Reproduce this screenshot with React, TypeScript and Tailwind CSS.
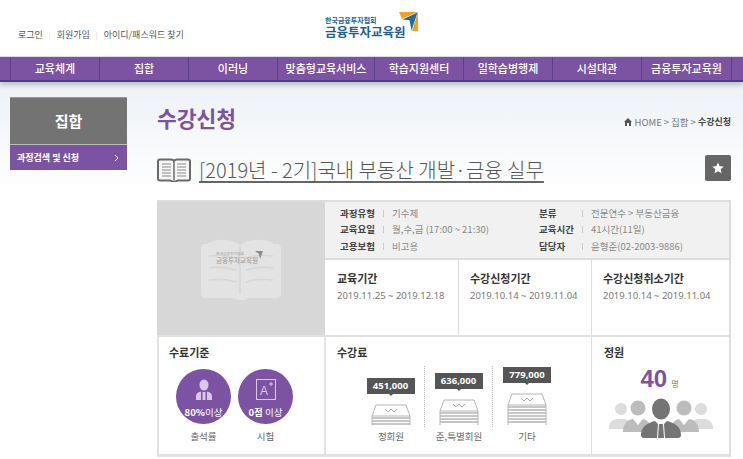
import React from "react";

const F = { fontFamily: '"Noto Sans CJK KR","Noto Sans",sans-serif' };
const navs: [string, number][] = [
  ["교육체계", 89], ["집합", 89], ["이러닝", 89], ["맞춤형교육서비스", 97],
  ["학습지원센터", 89], ["일학습병행제", 89], ["시설대관", 89], ["금융투자교육원", 90],
];

function BookOutline() {
  return (
    <svg width="34" height="24" viewBox="0 0 34 24" fill="none" stroke="#6a6a6a" strokeWidth="2" strokeLinejoin="round">
      <path d="M3 1.500h11c1.500 0 2.500.7 3 1.500.5-.8 1.500-1.500 3-1.500h11c1 0 2 1 2 2v17c0 1-1 2-2 2H20.500l-1.500 1h-4l-1.500-1H3c-1 0-2-1-2-2v-17c0-1 1-2 2-2z" fill="#f6f6f6" />
      <path d="M17 3v19" strokeWidth="1.500" />
      <path strokeWidth="1.200" stroke="#8a8a8a" d="M5 6h9M5 9h9M5 12h9M5 15h9M5 18h9M20 6h9M20 9h9M20 12h9M20 15h9M20 18h9" />
    </svg>
  );
}

function BookLight() {
  return (
    <svg width="80" height="66" viewBox="0 0 80 66" fill="#e3e3e3" stroke="none">
      <path d="M4 6h3v-1C18 0 31 1 39 7c8-6 21-7 33-2v1h4c2 0 4 2 4 4v46c0 2-2 4-4 4H48c-2 0-3 2-5 2h-6c-2 0-3-2-5-2H4c-2 0-4-2-4-4V10c0-2 2-4 4-4z" />
      <path d="M8 18c9-1.500 19-.5 27 2M8 30c9-1.500 19-.5 27 2M8 42c9-1.500 19-.5 27 2M72 18c-9-1.500-19-.5-27 2M72 30c-9-1.500-19-.5-27 2M72 42c-9-1.500-19-.5-27 2M39 8v48" fill="none" stroke="#d6d6d6" strokeWidth="1.500" />
    </svg>
  );
}

function Logo() {
  return (
    <svg width="20" height="20" viewBox="0 0 20 20">
      <path d="M1 0h19L4 7z" fill="#f7a11f" />
      <path d="M20 0v19h-6z" fill="#f7a11f" />
      <path d="M19.500 .500 4.500 7.500l7 .8L13.500 18.500z" fill="#1c6ea8" />
    </svg>
  );
}

function Money({ h }: { h: number }) {
  const lines = [];
  for (let y = 14; y < h; y += 3) lines.push(y);
  return (
    <svg width="40" height={h} viewBox={`0 0 40 ${h}`} fill="none" stroke="#b5b5b5" strokeWidth="1">
      <path d="M1 12 5 1h30l4 11z" fill="#fff" />
      <path d="M14 5l3 3 3-3 3 3 3-3" stroke="#aaa" />
      {lines.map((y) => (
        <path key={y} d={`M1 ${y}h38`} strokeWidth="1.600" />
      ))}
      <path d={`M1 12v${h - 12}M39 12v${h - 12}`} />
    </svg>
  );
}

function People() {
  return (
    <svg width="104" height="42" viewBox="0 0 104 42">
      <g fill="#dcdcdc">
        <circle cx="12" cy="11" r="6" /><circle cx="92" cy="11" r="6" />
        <path d="M0 31c0-7 3-9 8-10h8c4 1 6 3 7 10zM104 31c0-7-3-9-8-10h-8c-4 1-6 3-7 10z" />
      </g>
      <g fill="#bcbcbc">
        <circle cx="29" cy="10" r="7.500" /><circle cx="75" cy="10" r="7.500" />
        <path d="M14 34c0-8 4-12 10-13l5 6 5-6c5 1 8 5 9 13zM90 34c0-8-4-12-10-13l-5 6-5-6c-5 1-8 5-9 13z" />
      </g>
      <ellipse cx="52" cy="11" rx="9" ry="10.500" fill="#747474" />
      <path d="M35 40c-2 0-3-1-3-3 0-8 6-12 14-14l3 3-1 14zM69 40c2 0 3-1 3-3 0-8-6-12-14-14l-3 3 1 14zM50 26h4l1 14h-6z" fill="#747474" />
    </svg>
  );
}

function Price({ price, label, h, last }: { price: string; label: string; h: number; last?: boolean }) {
  return (
    <div className="w-[68px] flex flex-col items-center relative">
      <div className={`flex flex-col items-center justify-end w-full h-[61px] ${last ? "" : "border-r border-dotted border-[#bbb]"}`}>
        <div className="relative w-[48px] h-[16px] bg-[#555] text-white text-[9.500px] font-bold leading-[15px] text-center mb-[10px] shrink-0" style={{ fontFamily: '"Noto Sans",sans-serif' }}>
          {price}
          <span className="absolute left-1/2 -translate-x-1/2 top-[15px] w-0 h-0 border-x-[3px] border-x-transparent border-t-[3px] border-t-[#555]" />
        </div>
        <Money h={h} />
        <div className="h-[2px]" />
      </div>
      <div className="text-[9.500px] text-[#666] mt-[2px] leading-[14px]">{label}</div>
    </div>
  );
}

function Circle({ pct, children, small }: { pct: React.ReactNode; children: React.ReactNode; small: string }) {
  return (
    <div className="w-[55px] flex flex-col items-center">
      <div className="w-[55px] h-[55px] rounded-full bg-[#7c53a3] flex flex-col items-center pt-[10px]">
        <div className="h-[24px]">{children}</div>
        <div className="text-white text-[9.500px] leading-[14px] mt-[2px] whitespace-nowrap">{pct}</div>
      </div>
      <div className="text-[9.500px] text-[#666] mt-[5px] leading-[14px]">{small}</div>
    </div>
  );
}

function Info({ label, value }: { label: string; value: string }) {
  return (
    <div className="flex items-center h-[16.500px] text-[9.500px] leading-none whitespace-nowrap">
      <span className="font-bold text-[#444] w-[43px]">{label}</span>
      <span className="w-px h-[7px] bg-[#ccc] mr-[8px]" />
      <span className="text-[#888]">{value}</span>
    </div>
  );
}

function Period({ title, date, cls }: { title: string; date: string; cls: string }) {
  return (
    <div className={`pt-[11px] ${cls}`}>
      <div className="text-[11px] font-bold text-[#333] leading-[14px]">{title}</div>
      <div className="text-[9.500px] text-[#777] leading-[14px] mt-[4px]" style={{ fontFamily: '"Noto Sans","Noto Sans CJK KR",sans-serif' }}>{date}</div>
    </div>
  );
}

export default function App() {
  return (
    <div className="w-[743px] h-[459px] overflow-hidden bg-white relative" style={F}>
      <header className="h-[56px] flex">
        <div className="w-[325px] pl-[18px] pt-[28px] flex items-start text-[9px] text-[#555] leading-[14px]">
          <span>로그인</span>
          <span className="mx-[6px] text-[#ccc] text-[7px]">|</span>
          <span>회원가입</span>
          <span className="mx-[6px] text-[#ccc] text-[7px]">|</span>
          <span>아이디/패스워드 찾기</span>
        </div>
        <div className="pt-[12px] flex items-start">
          <div className="w-[84px] pt-[4px] text-[#1c5f96]">
            <div className="text-[7px] font-bold leading-[8px] whitespace-nowrap">한국금융투자협회</div>
            <div className="text-[12.500px] font-bold leading-[16px] whitespace-nowrap">금융투자교육원</div>
          </div>
          <div className="-ml-[11px]"><Logo /></div>
        </div>
      </header>

      <nav className="h-[26px] bg-[#7c53a3] border-b-[2px] border-b-[#4f3a80] border-t border-t-[#ddd] flex pl-[10px] shadow-[0_3px_5px_rgba(90,100,120,0.35)] relative">
        {navs.map(([n, w]) => (
          <div key={n} style={{ width: w }} className="border-l border-l-[#5f3f8a] text-white text-[11px] font-medium leading-[23px] text-center shrink-0 whitespace-nowrap">{n}</div>
        ))}
        <div className="border-l border-l-[#5f3f8a] flex-1" />
      </nav>

      <div className="flex bg-gradient-to-b from-[#edf1f6] to-[#ffffff] to-[110px] h-[377px]">
        <aside className="ml-[10px] mt-[15px] w-[117px] shrink-0">
          <div className="h-[47px] bg-[#737373] border-t border-[#999] text-white text-[15px] font-bold flex items-center justify-center">집합</div>
          <div className="h-px bg-[#bbb]" />
          <div className="h-[25px] bg-[#7c53a3] text-white text-[9px] font-bold flex items-center justify-between pl-[7px] pr-[8px]">
            <span>과정검색 및 신청</span>
            <svg width="5" height="8" viewBox="0 0 5 8" fill="none" stroke="#fff" strokeWidth="1"><path d="M1 1l3 3-3 3" /></svg>
          </div>
        </aside>

        <main className="ml-[30px] w-[574px] shrink-0">
          <div className="flex justify-between items-start h-[61px] pt-[20px]">
            <h1 className="text-[21.500px] font-bold text-[#7c53a3] leading-[32px]">수강신청</h1>
            <div className="flex items-center text-[9.500px] text-[#777] mt-[12px] leading-[16px] whitespace-nowrap">
              <svg width="8" height="8" viewBox="0 0 8 8" fill="#555" className="mr-[3px]"><path d="M4 0 8 4H7v4H5V5H3v3H1V4H0z" /></svg>
              <span>HOME</span>
              <span className="mx-[2px]">&gt;</span>
              <span>집합</span>
              <span className="mx-[2px]">&gt;</span>
              <span className="text-[#444] text-[9px] font-bold">수강신청</span>
            </div>
          </div>

          <div className="flex items-center justify-between h-[57px]">
            <div className="flex items-center -mt-[3px]">
              <BookOutline />
              <span className="ml-[8px] text-[20px] font-light text-[#555] underline decoration-[#666] decoration-[1.500px] underline-offset-[3px] leading-[28px] whitespace-nowrap">[2019년 - 2기]국내 부동산 개발·금융 실무</span>
            </div>
            <div className="w-[26px] h-[26px] bg-[#666] rounded-[2px] flex items-center justify-center -mt-[7px]">
              <svg width="12" height="12" viewBox="0 0 24 24" fill="#fff"><path d="M12 1l3.400 7.300 7.900.9-5.900 5.400 1.600 7.900L12 18.500l-7 4 1.600-7.900L.7 9.200l7.900-.9z" /></svg>
            </div>
          </div>

          <div className="border-t-[2px] border-[#ddd] border-r-[2px]">
            <div className="flex">
              <div className="w-[168px] h-[133px] bg-[#d7d7d7] relative flex items-center justify-center shrink-0">
                <div className="mt-[4px]"><BookLight /></div>
                <div className="absolute left-[59px] top-[49px] text-[#a0a0a0]">
                  <div className="text-[3.800px] leading-[5px] whitespace-nowrap">한국금융투자협회</div>
                  <div className="text-[6.500px] font-medium leading-[9px] whitespace-nowrap">금융투자교육원</div>
                </div>
                <svg width="8" height="8" viewBox="0 0 8 8" className="absolute left-[98px] top-[49px]" fill="#8c8c8c"><path d="M0 0h8L5 8 4 3z" /></svg>
              </div>
              <div className="flex-1">
                <div className="h-[58px] bg-[#f1f1f1] border-b-[2px] border-[#ddd] flex pt-[3px]">
                  <div className="w-[214px] pl-[15px] shrink-0">
                    <Info label="과정유형" value="기수제" />
                    <Info label="교육요일" value="월,수,금 (17:00 ~ 21:30)" />
                    <Info label="고용보험" value="비고용" />
                  </div>
                  <div>
                    <Info label="분류" value="전문연수 > 부동산금융" />
                    <Info label="교육시간" value="41시간(11일)" />
                    <Info label="담당자" value="윤형준(02-2003-9886)" />
                  </div>
                </div>
                <div className="flex h-[75px]">
                  <Period title="교육기간" date="2019.11.25 ~ 2019.12.18" cls="w-[134px] pl-[12px] border-r-[1px] border-[#ddd]" />
                  <Period title="수강신청기간" date="2019.10.14 ~ 2019.11.04" cls="w-[133px] pl-[11px] border-r-[1px] border-[#ddd]" />
                  <Period title="수강신청취소기간" date="2019.10.14 ~ 2019.11.04" cls="flex-1 pl-[11px]" />
                </div>
              </div>
            </div>

            <div className="flex h-[122px] border-t-[2px] border-b-[3px] border-[#e2e2e2]">
              <div className="w-[169px] border-l-[2px] border-r-[2px] border-[#e2e2e2] pl-[10px] pt-[8px] shrink-0">
                <div className="text-[11px] font-bold text-[#333] leading-[14px]">수료기준</div>
                <div className="flex gap-[7px] ml-[7px] mt-[10px]">
                  <Circle small="출석률" pct={<><b>80%</b>이상</>}>
                    <svg width="18" height="24" viewBox="0 0 18 24" fill="#d9c8ea"><ellipse cx="9" cy="6" rx="4.500" ry="5.500" /><path d="M1 21v-4c0-3 3-4 5-4.500V21zM17 21v-4c0-3-3-4-5-4.500V21zM7.500 13h3v8h-3z" /></svg>
                  </Circle>
                  <Circle small="시험" pct={<><b>0점</b> 이상</>}>
                    <svg width="20" height="22" viewBox="0 0 20 22" fill="none" stroke="#d9c8ea"><rect x="0.500" y="0.500" width="19" height="20" /><text x="4" y="16" fontSize="12" fill="#d9c8ea" stroke="none" fontFamily="Liberation Sans">A</text><path d="M13 5h4M15 3v4" /></svg>
                  </Circle>
                </div>
              </div>
              <div className="w-[266px] border-r-[1px] border-[#ddd] pl-[11px] pt-[8px] shrink-0">
                <div className="text-[11px] font-bold text-[#333] leading-[14px]">수강료</div>
                <div className="flex ml-[20px] mt-[7px]">
                  <Price price="451,000" label="정회원" h={21} />
                  <Price price="636,000" label="준,특별회원" h={26} />
                  <Price price="779,000" label="기타" h={32} last />
                </div>
              </div>
              <div className="flex-1 pl-[12px] pt-[8px]">
                <div className="text-[11px] font-bold text-[#333] leading-[14px]">정원</div>
                <div className="flex items-end justify-center pr-[14px] mt-[3px] h-[32px] leading-none">
                  <span className="text-[24px] font-bold text-[#7c53a3] leading-[30px]" style={{ fontFamily: '"Liberation Sans",sans-serif' }}>40</span>
                  <span className="text-[8px] text-[#777] ml-[4px] mb-[6px]">명</span>
                </div>
                <div className="ml-[5px] mt-[4px]"><People /></div>
              </div>
            </div>
          </div>
        </main>
      </div>
    </div>
  );
}
